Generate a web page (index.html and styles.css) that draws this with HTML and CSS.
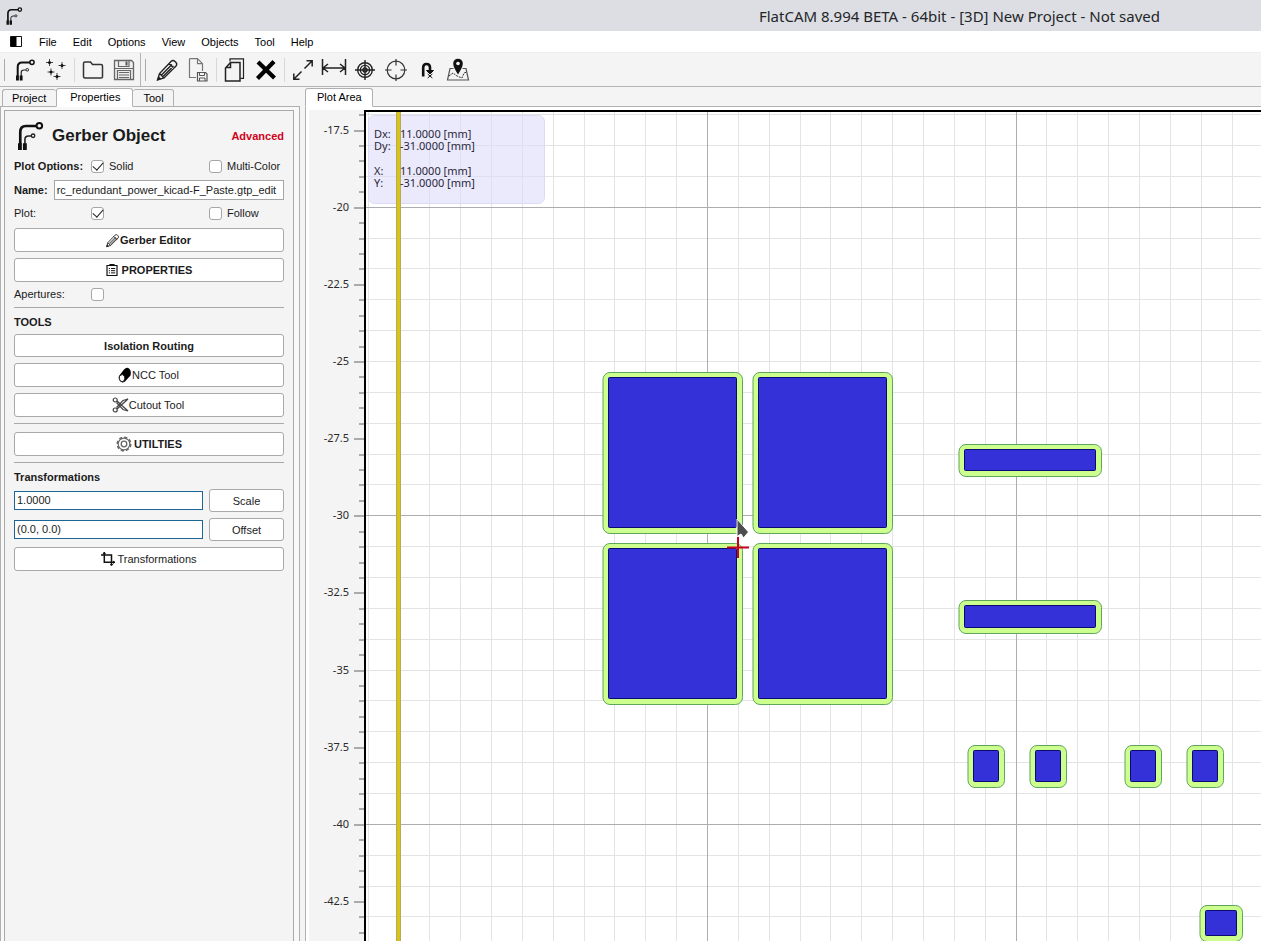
FILE: index.html
```html
<!DOCTYPE html>
<html lang="en">
<head>
<meta charset="utf-8">
<title>FlatCAM 8.994 BETA</title>
<link rel="stylesheet" href="styles.css">
</head>
<body>
<svg class="defs" aria-hidden="true">
  <symbol id="gerber" viewBox="0 0 24 24">
    <path d="M4.700 18V9Q4.700 4.500 9 4.500H17" fill="none" stroke="#111" stroke-width="2"/>
    <circle cx="19" cy="4.300" r="2.100" fill="none" stroke="#111" stroke-width="1.500"/>
    <path d="M8.200 18V14.500Q8.200 12 11 12H13" fill="none" stroke="#222" stroke-width="1.200"/>
    <circle cx="14.300" cy="11.800" r="1.300" fill="none" stroke="#222"/>
    <path d="M3 17.500h2.900v5H3zM6.700 17.500h2.900v5H6.700z" fill="#111"/>
  </symbol>
  <symbol id="pencil" viewBox="0 0 24 24">
    <path d="M2.500 22L4.500 15.500 16 3.500Q18 1.500 20 3.500L21 4.500Q22.500 6 21 8L9 20ZM14 5.500L19 10.500M4.500 15.500L9 20M6.500 17L17 6.500M8 18.500L18.500 8" fill="none" stroke="#222" stroke-width="1.400"/>
    <path d="M2 22.500L3.500 18 6.500 21Z" fill="#222"/>
  </symbol>
</svg>

<header class="titlebar">
  <svg class="app-icon"><use href="#gerber"/></svg>
  <h1 class="window-title">FlatCAM 8.994 BETA - 64bit - [3D] New Project - Not saved</h1>
</header>

<nav class="menubar">
  <button class="menu-toggle" aria-label="Toggle panel"><svg width="13" height="12" viewBox="0 0 13 12"><path d="M.5.5h11v10H.5z" fill="#fff" stroke="#111"/><path d="M1 1h5.500v9.500H1z" fill="#000"/></svg></button>
  <button>File</button><button>Edit</button><button>Options</button><button>View</button><button>Objects</button><button>Tool</button><button>Help</button>
</nav>

<div class="toolbar">
  <div class="tool-group">
    <button aria-label="Open Gerber"><svg><use href="#gerber"/></svg></button>
    <button aria-label="Open Excellon"><svg viewBox="0 0 24 24"><path d="M5.500 1v7M2 4.500h7M18 4v7M14.500 7.500h7M7 10.500v7M3.500 14h7M13 15v7M9.500 18.500h7" stroke="#444" fill="none"/><g fill="#111"><circle cx="5.500" cy="4.500" r="1.500"/><circle cx="18" cy="7.500" r="1.500"/><circle cx="7" cy="14" r="1.500"/><circle cx="13" cy="18.500" r="1.500"/></g></svg></button>
    <i class="sep"></i>
    <button aria-label="Open project"><svg viewBox="0 0 24 24"><path d="M2.500 5.500Q2.500 4 4 4h5.500l2 2.500H20q1.500 0 1.500 1.500v11q0 1-1.500 1H4q-1.500 0-1.500-1.500z" fill="none" stroke="#333" stroke-width="1.500"/></svg></button>
    <button aria-label="Save project"><svg viewBox="0 0 24 24"><path d="M2.500 2.500h17l2 2v17h-19z" fill="#eee" stroke="#666" stroke-width="1.300"/><path d="M6.500 3v5.500h10.500V3M5.500 21V12.500h13V21M2.500 10.500h19M7 14.500h10M7 17h10M7 19.500h10" fill="none" stroke="#666" stroke-width="1.200"/><path d="M13.500 3.500h2v4h-2z" fill="#555"/></svg></button>
  </div>
  <div class="tool-group divided">
    <button aria-label="Edit object"><svg><use href="#pencil"/></svg></button>
    <button aria-label="Save edits"><svg viewBox="0 0 24 24"><path d="M3.500.7h8l5 5V13M10 19.500H3.500V.7M11.500.7v5h5" fill="none" stroke="#777" stroke-width="1.200"/><path d="M11.500 14.500h8l1.500 1.500v7h-9.500z" fill="#f4f4f4" stroke="#555" stroke-width="1.200"/><path d="M13.500 14.500v3h5v-3M13.500 23v-3h5.500v3" fill="none" stroke="#555"/></svg></button>
    <i class="sep"></i>
    <button aria-label="Copy"><svg viewBox="0 0 24 24"><path d="M7 3.500V.8h13.500v19.500H17.500" fill="none" stroke="#222" stroke-width="1.200"/><path d="M7.500 4.500h9.500v18.500H2.500v-13zM7.500 4.500v5h-5" fill="#f4f4f4" stroke="#222" stroke-width="1.500"/></svg></button>
    <button aria-label="Delete"><svg viewBox="0 0 24 24"><path d="M4 4L20.500 20M20 3.500L3.500 20.500" stroke="#000" stroke-width="4.200"/></svg></button>
    <i class="sep"></i>
    <button aria-label="Distance"><svg viewBox="0 0 24 24"><path d="M13.500 10.500L21 3M15.500 2.800h5.700v5.700M10.500 13.500L3 21M8.500 21.200H2.800v-5.700" fill="none" stroke="#222" stroke-width="1.500"/></svg></button>
    <button class="wide" aria-label="Minimum distance"><svg viewBox="0 0 26 24"><path d="M1.500 1v16M24.500 1v16M2 10h22M7 6l-5 4 5 4M19 6l5 4-5 4" fill="none" stroke="#222" stroke-width="1.500"/></svg></button>
    <button aria-label="Set origin"><svg viewBox="0 0 24 24"><g fill="none" stroke="#222" stroke-width="1.400"><circle cx="12" cy="12" r="7.300"/><circle cx="12" cy="12" r="4.600"/><circle cx="12" cy="12" r="2"/><path d="M12 2v20M2 12h20"/></g></svg></button>
    <button aria-label="Jump to location"><svg viewBox="0 0 24 24"><g fill="none" stroke="#333" stroke-width="1.200"><circle cx="12" cy="12" r="8.800"/><path d="M12 1v6.500M12 16.500V23M1 12h6.500M16.500 12H23"/></g></svg></button>
    <button aria-label="Locate in object"><svg viewBox="0 0 24 24"><path d="M8.200 18.500V9.500Q8.200 6 11.500 6Q15 6 15 9.500V13" fill="none" stroke="#111" stroke-width="2.600"/><path d="M11.500 12.500h7L15 16zM12.700 16l4.600 4M17.300 16l-4.600 4" fill="#111" stroke="#111"/></svg></button>
    <button aria-label="Map"><svg viewBox="0 0 24 24"><path d="M7.500 10.500H4L1.500 22H22.500L20 10.500H16.500" fill="none" stroke="#555" stroke-width="1.200"/><path d="M3 18l4-3 4 3 5 2 2-5 3-1" fill="none" stroke="#333" stroke-dasharray="2 1"/><path d="M12 16.500Q7.200 9 7.200 5.500A4.800 4.800 0 0 1 16.800 5.500Q16.800 9 12 16.500Z" fill="#111"/><circle cx="12" cy="5.500" r="1.800" fill="#f4f4f4"/></svg></button>
  </div>
</div>

<main class="workspace">
  <section class="side">
    <div class="tabs" role="tablist">
      <button role="tab">Project</button><button role="tab" class="active" aria-selected="true">Properties</button><button role="tab">Tool</button>
    </div>
    <div class="side-pane">
      <form class="props">
        <div class="heading">
          <svg><use href="#gerber"/></svg>
          <h2>Gerber Object</h2>
          <strong class="level">Advanced</strong>
        </div>
        <div class="row options">
          <b>Plot Options:</b>
          <label><input type="checkbox" checked>Solid</label>
          <label><input type="checkbox">Multi-Color</label>
        </div>
        <div class="name-row">
          <label for="name"><b>Name:</b></label>
          <input id="name" class="field" type="text" value="rc_redundant_power_kicad-F_Paste.gtp_edit">
        </div>
        <div class="row">
          <label for="plot">Plot:</label>
          <span class="check"><input id="plot" type="checkbox" checked></span>
          <label><input type="checkbox">Follow</label>
        </div>
        <div class="stack">
          <button type="button" class="btn strong snug"><svg width="15" height="15"><use href="#pencil"/></svg>Gerber Editor</button>
          <button type="button" class="btn strong"><svg width="12" height="12" viewBox="0 0 12 12"><path d="M1 1.500h10v10H1zM4 1.500V.6h4v.9" fill="none" stroke="#111" stroke-width="1.200"/><path d="M2.800 4.500h1.200M5 4.500h4.200M2.800 6.700h1.200M5 6.700h4.200M2.800 8.900h1.200M5 8.900h4.200" stroke="#111"/></svg>PROPERTIES</button>
        </div>
        <div class="row apertures">
          <label for="apertures">Apertures:</label>
          <span class="check"><input id="apertures" type="checkbox"></span>
        </div>
        <hr>
        <h3>TOOLS</h3>
        <div class="stack">
          <button type="button" class="btn strong short">Isolation Routing</button>
          <button type="button" class="btn snug"><svg width="15" height="16" viewBox="0 0 15 16"><path d="M2 9L7 2.500Q10-.5 12.500 2Q14.500 4 13.500 8.500L8 14.500Q5 16.500 3 14Q1.200 12 2 9Z" fill="#000"/><path d="M2.500 9Q5.500 6 7.300 9Q8.500 11 7 13.800Q5 15.800 3 13.500Q1.800 11.500 2.500 9Z" fill="#fff" stroke="#222"/></svg>NCC Tool</button>
          <button type="button" class="btn snug"><svg width="17" height="16" viewBox="0 0 17 16"><g fill="none" stroke="#444" stroke-width="1.200"><circle cx="3.200" cy="3" r="2"/><circle cx="3.200" cy="13" r="2"/><path d="M5 4L16 14L11 12.500L4.500 5.500M5 12L16 2L11 3.500L4.500 10.500"/></g></svg>Cutout Tool</button>
        </div>
        <hr>
        <div class="stack utilities">
          <button type="button" class="btn strong tight"><svg width="16" height="16" viewBox="0 0 16 16"><g fill="none" stroke="#666"><circle cx="8" cy="8" r="6.800" stroke-width="1.500" stroke-dasharray="3.200 2.140"/><circle cx="8" cy="8" r="5.800" stroke-width="1.200"/><circle cx="8" cy="8" r="2.800" stroke-width="1.300"/></g></svg>UTILTIES</button>
        </div>
        <hr>
        <h3>Transformations</h3>
        <div class="pair">
          <input class="field entry" type="text" value="1.0000" aria-label="Scale factor">
          <button type="button" class="btn short">Scale</button>
        </div>
        <div class="pair">
          <input class="field entry" type="text" value="(0.0, 0.0)" aria-label="Offset vector">
          <button type="button" class="btn short">Offset</button>
        </div>
        <button type="button" class="btn tight"><svg width="14" height="14" viewBox="0 0 14 14"><path d="M0 3h10.500v10.500M3.300 0v10.300H14" fill="none" stroke="#111" stroke-width="1.500"/><path d="M1.500 2L3.300 0l1.800 2zM8.700 12l1.800 2 1.800-2zM12 8.500l2 1.800-2 1.800z" fill="#111"/></svg>Transformations</button>
      </form>
    </div>
  </section>

  <section class="plot">
    <div class="tabs" role="tablist"><button role="tab" class="active" aria-selected="true">Plot Area</button></div>
    <div class="plot-pane">
      <svg class="axis" id="axis"></svg>
      <div class="canvas">
        <svg class="scene" id="scene">
          <g id="grid"></g>
          <rect x="2.500" y="3.500" width="176" height="88" rx="6" class="readout-box"/>
          <rect x="30" y="0" width="5" height="100%" fill="#b5aa62"/>
          <rect x="31" y="0" width="3" height="100%" fill="#d9c414"/>
          <g id="pads"></g>
          <path d="M371 407L382.500 420 377.500 426 375 422 371 424.500Z" fill="#4d4d4d" stroke="#fff"/>
          <path d="M372 425v21M361 435.500h22" stroke="#cc0020" stroke-width="2"/>
        </svg>
        <div class="readout">
          <span>Dx:</span><span>11.0000 [mm]</span>
          <span>Dy:</span><span>-31.0000 [mm]</span>
          <span class="gap">X:</span><span class="gap">11.0000 [mm]</span>
          <span>Y:</span><span>-31.0000 [mm]</span>
        </div>
      </div>
    </div>
  </section>
</main>
<script src="plot.js"></script>
</body>
</html>
```
FILE: styles.css
```css
* { box-sizing: border-box; }
html, body { height: 100%; }
body {
  margin: 0;
  display: flex;
  flex-direction: column;
  overflow: hidden;
  background: #f4f4f4;
  color: #1b1b1b;
  font: 11px/13px "Liberation Sans", Arial, sans-serif;
}
button, input { font: inherit; color: inherit; margin: 0; }
button { padding: 0; border: 0; background: none; }
h1, h2, h3 { margin: 0; }
.defs { display: none; }

.titlebar {
  display: flex;
  flex: none;
  align-items: center;
  height: 31px;
  padding: 0 101px 0 4px;
  background: #dddee3;
}
.app-icon { width: 20px; height: 20px; }
.window-title {
  margin-left: auto;
  color: #232629;
  font: 15px/20px "Noto Sans", sans-serif;
}

.menubar {
  display: flex;
  flex: none;
  align-items: center;
  height: 22px;
  padding: 1px 0 0 2px;
  background: #fff;
  border-bottom: 1px solid #eee;
}
.menubar button { padding: 0 8px; color: #000; }
.menubar .menu-toggle { width: 29px; height: 12px; }
.menu-toggle svg { display: block; }

.toolbar {
  display: flex;
  flex: none;
  height: 34px;
  border-bottom: 1px solid #b4b4b4;
}
.tool-group { display: flex; align-items: center; padding-left: 9px; position: relative; }
.tool-group::before {
  content: "";
  position: absolute;
  left: 4px;
  top: 6px;
  width: 1px;
  height: 22px;
  background: #aaa;
}
.divided { border-left: 1px solid #b4b4b4; margin-left: 1px; padding-left: 10px; }
.tool-group button { width: 31px; height: 24px; display: grid; place-items: center; }
.tool-group svg { width: 24px; height: 24px; display: block; }
.tool-group .wide svg { width: 26px; }
.sep { width: 6px; height: 24px; background: linear-gradient(#d8d8d8, #d8d8d8) center / 1px 100% no-repeat; }

.workspace { display: flex; flex: 1; min-height: 0; padding-top: 1px; }
.side { display: flex; flex-direction: column; flex: none; width: 300px; margin-right: 5px; }
.plot { display: flex; flex-direction: column; flex: 1; min-width: 0; }

.tabs { display: flex; flex: none; align-items: flex-end; height: 19px; position: relative; margin-bottom: -1px; }
.side .tabs { padding-left: 2px; }
.tabs button {
  height: 18px;
  padding: 0 9px;
  color: #000;
  border: 1px solid #b0b0b0;
  border-radius: 3px 3px 0 0;
}
.tabs button + button:last-child { border-left: 0; padding: 0 9px 0 10px; }
.tabs button:first-child:not(.active) { border-right: 0; padding-right: 10px; }
.tabs .active {
  height: 19px;
  padding: 0 12px 1px 13px;
  background: #fff;
  border-bottom-color: #fff;
}
.plot .tabs .active { padding: 0 10px 1px 11px; }

.side-pane {
  flex: 1;
  display: flex;
  padding: 3px 5px 0 3px;
  border: 1px solid #b0b0b0;
  border-bottom: 0;
  background: #f8f8f8;
}
.props {
  flex: 1;
  display: flex;
  flex-direction: column;
  min-width: 0;
  padding: 10px 9px 0;
  border: 1px solid #a9a9a9;
  border-bottom: 0;
  background: #f4f4f4;
}
.heading { display: flex; align-items: center; height: 30px; margin-bottom: 9px; }
.heading svg { width: 32px; height: 32px; }
.heading h2 { margin-left: 6px; font-size: 17px; line-height: 20px; }
.level { margin-left: auto; color: #d0021b; }

.row { display: grid; grid-template-columns: 77px 118px 1fr; align-items: center; height: 13px; }
.options { margin-bottom: 7px; }
.row label { display: flex; align-items: center; gap: 5px; }
.check { display: flex; }
input[type="checkbox"] {
  appearance: none;
  display: grid;
  place-items: center;
  width: 13px;
  height: 13px;
  border: 1px solid #a6a6a6;
  border-radius: 3px;
  background: #fff;
}
input[type="checkbox"]:checked::after {
  content: "";
  width: 9px;
  height: 5px;
  margin-bottom: 3px;
  border: solid #222;
  border-width: 0 0 1px 1px;
  transform: rotate(-48deg);
}
.name-row { display: flex; align-items: center; gap: 6px; margin-bottom: 7px; }
.field { flex: 1; min-width: 0; height: 20px; padding: 0 2px; border: 1px solid #a6a6a6; background: #fff; }
.entry { height: 19px; padding-bottom: 1px; border-color: #1d6592; }

.stack { display: flex; flex-direction: column; gap: 6px; }
.row + .stack { margin-top: 8px; }
.btn {
  display: flex;
  align-items: center;
  justify-content: center;
  gap: 4px;
  height: 24px;
  border: 1px solid #a9a9a9;
  border-radius: 3px;
  background: #fff;
}
.short { height: 23px; padding-top: 1px; }
.tight { gap: 2px; }
.snug { gap: 0; padding-right: 2px; }
.strong { font-weight: bold; }
.apertures { margin-top: 6px; }
hr { width: 100%; height: 1px; margin: 6px 0 8px; border: 0; background: #a9a9a9; }
h3 { font-size: 11px; line-height: 13px; margin-bottom: 5px; }
.pair { display: grid; grid-template-columns: 189px 1fr; gap: 6px; align-items: center; margin-bottom: 6px; }

.plot-pane {
  flex: 1;
  display: flex;
  min-height: 0;
  padding: 3px 0 0 3px;
  border: 1px solid #b0b0b0;
  border-width: 1px 0 0 1px;
  background: #fff;
}
.axis { flex: none; width: 55px; height: 100%; background: #f4f4f4; }
.axis text { font: 11px "Noto Sans", sans-serif; fill: #2b2b2b; text-anchor: end; }
.axis path { stroke: #ababab; stroke-width: 2px; shape-rendering: crispEdges; }
.canvas { position: relative; flex: 1; min-width: 0; border: 2px solid #000; border-width: 2px 0 0 2px; background: #fff; }
.scene { display: block; width: 100%; height: 100%; }
.minor { stroke: #e4e4e4; }
.major { stroke: #adadad; }
.minor, .major { shape-rendering: crispEdges; }
.readout-box { fill: #dedcfb; fill-opacity: .6; stroke: #dddbf4; }
.halo { fill: #ccff8e; stroke: #5fa55b; }
.pad { fill: #3431d9; stroke: #0b0a70; }
.readout {
  position: absolute;
  left: 8px;
  top: 16px;
  display: grid;
  grid-template-columns: 26px auto;
  color: #2a2838;
  font: 11px/12px "Noto Sans", sans-serif;
}
.readout .gap { margin-top: 13px; }
```
FILE: plot.js
```js
const NS = "http://www.w3.org/2000/svg";
const SCALE = 30.86;               // pixels per millimetre
const ORIGIN = { x: 341, y: 95 };  // grid crossing at -20 mm on the y axis

function add(parent, tag, attrs, text) {
  const el = document.createElementNS(NS, tag);
  for (const key in attrs) el.setAttribute(key, attrs[key]);
  if (text) el.textContent = text;
  parent.appendChild(el);
}

const pads = [
  [242, 265, 129, 151], [392, 265, 129, 151],
  [242, 436, 129, 151], [392, 436, 129, 151],
  [598, 337, 132, 22], [598, 493, 132, 23],
  [607, 638, 26, 32], [669, 638, 26, 32], [764, 638, 26, 32], [826, 638, 26, 32],
  [839, 798, 32, 26]
];
const padLayer = document.getElementById("pads");
for (const [x, y, w, h] of pads) {
  add(padLayer, "rect", { class: "halo", x: x - 5, y: y - 4.5, width: w + 10.5, height: h + 10, rx: 7 });
  add(padLayer, "rect", { class: "pad", x: x + 0.5, y: y + 0.5, width: w - 1, height: h - 1, rx: 1 });
}

function draw() {
  const grid = document.getElementById("grid");
  const axis = document.getElementById("axis");
  const { width, height } = document.getElementById("scene").getBoundingClientRect();
  grid.replaceChildren();
  axis.replaceChildren();

  const lines = { minor: "", major: "" };
  for (let i = -11; ORIGIN.x + i * SCALE < width; i++) {
    const x = Math.round(ORIGIN.x + i * SCALE) + 0.5;
    lines[i % 10 ? "minor" : "major"] += `M${x} 0V${height}`;
  }
  for (let i = -3; ORIGIN.y + i * SCALE < height; i++) {
    const y = Math.round(ORIGIN.y + i * SCALE - 0.3) + 0.5;
    lines[i % 10 ? "minor" : "major"] += `M0 ${y}H${width}`;
  }
  add(grid, "path", { class: "minor", d: lines.minor });
  add(grid, "path", { class: "major", d: lines.major });

  let ticks = "";
  for (let i = -6; ORIGIN.y + i * SCALE / 2 < height; i++) {
    const y = Math.round(ORIGIN.y + 2 + i * SCALE / 2 - 0.3) + 1;
    const labelled = i % 5 === 0;
    ticks += `M${labelled ? 45 : 50} ${y}H55`;
    if (labelled) add(axis, "text", { x: 40, y: y + 3 }, String(-20 - i / 2));
  }
  add(axis, "path", { d: ticks });
}

draw();
window.addEventListener("resize", draw);
```
